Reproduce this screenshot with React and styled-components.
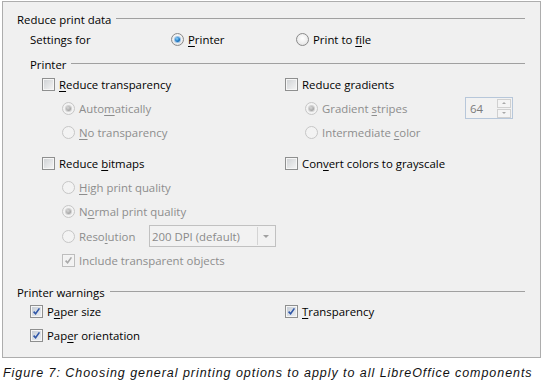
import React from "react";
import styled, { createGlobalStyle } from "styled-components";

const GlobalStyle = createGlobalStyle`
  html, body {
    margin: 0;
    padding: 0;
    background: #ffffff;
  }
  body {
    font-family: "Open Sans", "Noto Sans", sans-serif;
  }
`;

const Page = styled.div`
  width: 549px;
  height: 384px;
  box-sizing: border-box;
  padding: 1px 0 0 2px;
`;

const Panel = styled.div`
  width: 539px;
  height: 357px;
  box-sizing: border-box;
  border: 1px solid #adadad;
  background: #f0f0f0;
  padding: 9px 15px 0 14px;
  font-size: 11.4px;
  color: #000;
`;

const Header = styled.div`
  display: flex;
  align-items: center;
  gap: 5px;
  height: 16px;
  margin-top: ${(p) => p.$top || 0}px;
  padding-left: ${(p) => p.$indent || 0}px;
  white-space: nowrap;

  &::after {
    content: "";
    flex: 1;
    height: 0;
    border-top: 1px solid #a0a0a0;
    margin-top: -1px;
  }
`;

const Grid = styled.div`
  display: grid;
  grid-template-columns: ${(p) => p.$cols};
  padding-left: ${(p) => p.$indent || 0}px;
  margin-top: ${(p) => p.$top || 0}px;
`;

const Column = styled.div`
  display: flex;
  flex-direction: column;
`;

const Sub = styled.div`
  display: flex;
  flex-direction: column;
  padding-left: 20px;
`;

const Row = styled.div`
  display: flex;
  align-items: center;
  height: ${(p) => p.$h || 24}px;
  margin-top: ${(p) => p.$top || 0}px;
  white-space: nowrap;
`;

const Label = styled.span`
  margin-left: 4px;
  color: ${(p) => (p.$disabled ? "#8d8d8d" : "#000")};
  width: ${(p) => (p.$w ? `${p.$w}px` : "auto")};
  flex: none;
`;

const Key = styled.span`
  text-decoration: underline;
  text-underline-offset: 2px;
`;

const RadioMark = styled.span`
  flex: none;
  width: 13px;
  height: 13px;
  box-sizing: border-box;
  border-radius: 50%;
  border: 1px solid ${(p) => (p.$disabled ? "#c6c6c6" : "#8a8a8a")};
  background: ${(p) =>
    p.$disabled
      ? "#f3f3f3"
      : "radial-gradient(circle at 50% 40%, #ffffff 0%, #ececec 60%, #d6d6d6 100%)"};
  display: flex;
  align-items: center;
  justify-content: center;

  &::after {
    content: "";
    display: ${(p) => (p.$checked ? "block" : "none")};
    width: 5px;
    height: 5px;
    border-radius: 50%;
    box-shadow: 0 0 0 1px ${(p) => (p.$disabled ? "#d2d2d2" : "#9cc3e6")};
    background: ${(p) =>
      p.$disabled
        ? "radial-gradient(circle at 40% 35%, #d8d8d8, #a2a2a2 70%)"
        : "radial-gradient(circle at 40% 35%, #8fd2fa, #1b78c4 55%, #0b4b8e)"};
  }
`;

const CheckMark = styled.span`
  flex: none;
  width: 13px;
  height: 13px;
  box-sizing: border-box;
  border: 1px solid ${(p) => (p.$disabled ? "#bdbdbd" : "#8e8f8f")};
  box-shadow: inset 0 0 0 1px ${(p) => (p.$disabled ? "#f4f4f4" : "#f6f6f6")};
  background: ${(p) =>
    p.$disabled
      ? "#f2f2f2"
      : p.$checked
      ? "linear-gradient(135deg, #c3cad3, #eef1f5)"
      : "linear-gradient(135deg, #cdd0d3, #f6f6f6)"};
  display: flex;
  align-items: center;
  justify-content: center;

  svg {
    display: block;
  }
`;

const Radio = ({ checked, disabled, children, w }) => (
  <Row>
    <RadioMark $checked={checked} $disabled={disabled} />
    <Label $disabled={disabled} $w={w}>
      {children}
    </Label>
  </Row>
);

const Check = ({ checked, disabled, children, top }) => (
  <Row $top={top}>
    <CheckMark $checked={checked} $disabled={disabled}>
      {checked && (
        <svg width="9" height="9" viewBox="0 0 9 9">
          <path
            d="M1.6 4.6 L3.6 6.8 L7.4 1.4"
            fill="none"
            stroke={disabled ? "#a9a9a9" : "#2f56a8"}
            strokeWidth="1.6"
          />
        </svg>
      )}
    </CheckMark>
    <Label $disabled={disabled}>{children}</Label>
  </Row>
);

const Spin = styled.div`
  display: flex;
  align-items: center;
  width: 48px;
  height: 22px;
  box-sizing: border-box;
  border: 1px solid #b7c7da;
  background: #f2f2f2;
  color: #7b7b7b;
  padding-left: 4px;
`;

const SpinText = styled.span`
  flex: 1;
`;

const SpinButtons = styled.div`
  display: flex;
  flex-direction: column;
  gap: 1px;
  margin-right: 1px;
`;

const SpinButton = styled.span`
  width: 14px;
  height: 9px;
  box-sizing: border-box;
  border: 1px solid #d0d0d0;
  background: #f4f4f4;
  display: flex;
  align-items: center;
  justify-content: center;

  &::after {
    content: "";
    border-left: 2px solid transparent;
    border-right: 2px solid transparent;
    ${(p) =>
      p.$down
        ? "border-top: 2px solid #a8a8a8;"
        : "border-bottom: 2px solid #a8a8a8;"}
  }
`;

const Select = styled.div`
  display: flex;
  align-items: center;
  width: 127px;
  height: 22px;
  box-sizing: border-box;
  border: 1px solid #c1c1c1;
  background: #f2f2f2;
  color: #8a8a8a;
`;

const SelectText = styled.span`
  flex: 1;
  padding-left: 2px;
`;

const SelectButton = styled.span`
  width: 17px;
  height: 18px;
  box-sizing: border-box;
  border-left: 1px solid #d4d4d4;
  margin-right: 1px;
  display: flex;
  align-items: center;
  justify-content: center;

  &::after {
    content: "";
    border-left: 3px solid transparent;
    border-right: 3px solid transparent;
    border-top: 3px solid #a0a0a0;
  }
`;

const Caption = styled.div`
  margin: 8px 0 0 1px;
  font-family: "Liberation Sans", Arial, sans-serif;
  font-style: italic;
  font-size: 12.5px;
  letter-spacing: 0.95px;
  line-height: 14px;
  color: #111;
  white-space: nowrap;
`;

export default function App() {
  return (
    <Page>
      <GlobalStyle />
      <Panel>
        <Header>Reduce print data</Header>
        <Grid $cols="141px 125px 1fr" $indent={13}>
          <Row>Settings for</Row>
          <Radio checked>
            <Key>P</Key>rinter
          </Radio>
          <Radio>
            Print to <Key>f</Key>ile
          </Radio>
        </Grid>

        <Header $top={5} $indent={13}>
          Printer
        </Header>
        <Grid $cols="243px 1fr" $indent={25}>
          <Column>
            <Check>
              <Key>R</Key>educe transparency
            </Check>
            <Sub>
              <Radio checked disabled>
                Auto<Key>m</Key>atically
              </Radio>
              <Radio disabled>
                <Key>N</Key>o transparency
              </Radio>
            </Sub>
            <Check top={7}>
              Reduce <Key>b</Key>itmaps
            </Check>
            <Sub>
              <Radio disabled>
                <Key>H</Key>igh print quality
              </Radio>
              <Row $h={25}>
                <RadioMark $checked $disabled />
                <Label $disabled>
                  N<Key>o</Key>rmal print quality
                </Label>
              </Row>
              <Row>
                <RadioMark $disabled />
                <Label $disabled $w={70}>
                  Reso<Key>l</Key>ution
                </Label>
                <Select>
                  <SelectText>200 DPI (default)</SelectText>
                  <SelectButton />
                </Select>
              </Row>
              <Check checked disabled>
                Include transparent objects
              </Check>
            </Sub>
          </Column>

          <Column>
            <Check>
              Reduce <Key>g</Key>radients
            </Check>
            <Sub>
              <Row>
                <RadioMark $checked $disabled />
                <Label $disabled $w={143}>
                  Gradient <Key>s</Key>tripes
                </Label>
                <Spin>
                  <SpinText>64</SpinText>
                  <SpinButtons>
                    <SpinButton />
                    <SpinButton $down />
                  </SpinButtons>
                </Spin>
              </Row>
              <Radio disabled>
                Intermediate <Key>c</Key>olor
              </Radio>
            </Sub>
            <Check top={7}>
              Con<Key>v</Key>ert colors to grayscale
            </Check>
          </Column>
        </Grid>

        <Header $top={12}>Printer warnings</Header>
        <Grid $cols="255px 1fr" $indent={13} $top={-1}>
          <Check checked>
            P<Key>a</Key>per size
          </Check>
          <Check checked>
            <Key>T</Key>ransparency
          </Check>
          <Check checked>
            Pap<Key>e</Key>r orientation
          </Check>
        </Grid>
      </Panel>
      <Caption>
        Figure 7: Choosing general printing options to apply to all
        LibreOffice components
      </Caption>
    </Page>
  );
}
